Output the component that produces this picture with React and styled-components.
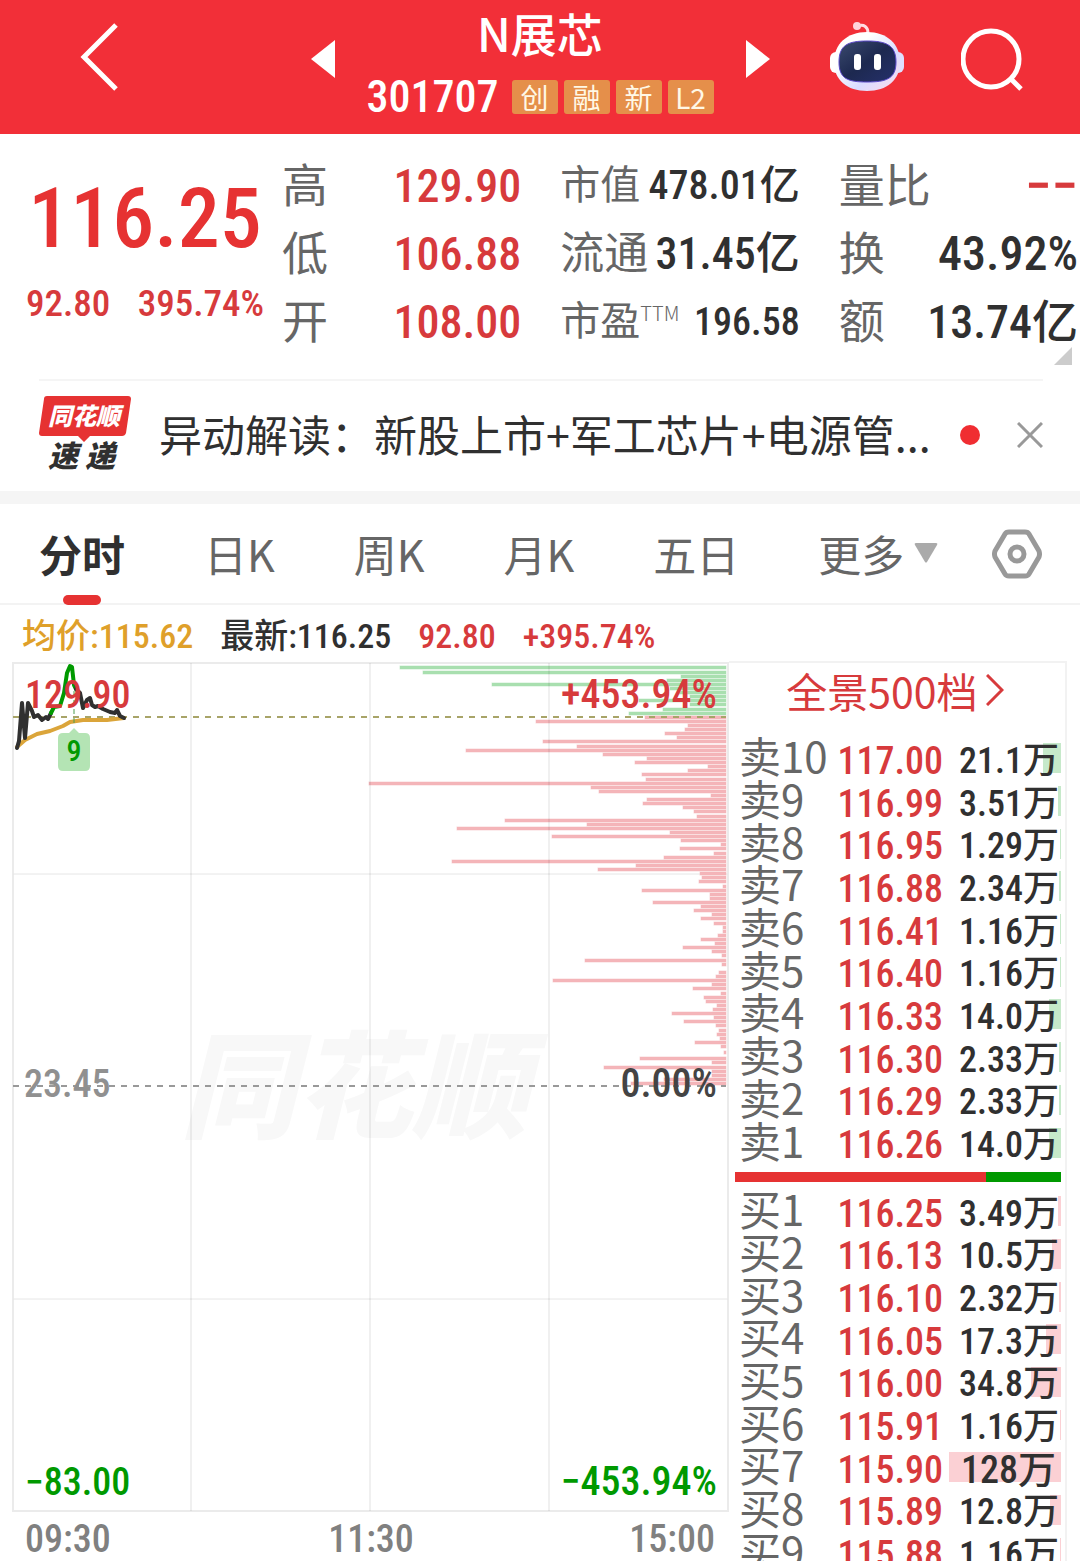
import React from 'react';
import styled, { createGlobalStyle } from 'styled-components';

const GlobalStyle = createGlobalStyle`
  * {
    box-sizing: border-box;
  }
  body {
    margin: 0;
    background: #fff;
    color: #303030;
    font-family: "Noto Sans CJK SC", sans-serif;
  }
  button {
    border: 0;
    padding: 0;
    background: none;
    color: inherit;
    font: inherit;
    cursor: pointer;
  }
  a {
    color: inherit;
    text-decoration: none;
  }
  svg {
    display: block;
  }
`;

const numberFont = '"Roboto Condensed", "Liberation Sans Narrow", Roboto, "Noto Sans CJK SC", sans-serif';

const Page = styled.div`
  height: 100vh;
  overflow: hidden;
`;

/* ---------- header ---------- */

const Header = styled.header`
  display: grid;
  grid-template-columns: 1fr auto 1fr;
  align-items: center;
  padding: 9px 57px 15px;
  background: #f22f38;
  color: #fff;
`;

const HeaderSide = styled.div`
  display: flex;
  justify-content: ${(p) => (p.$end ? 'flex-end' : 'flex-start')};
  align-items: center;
  gap: 57px;
  padding: 0 0 ${(p) => (p.$end ? 10 : 14)}px ${(p) => (p.$end ? 0 : 23)}px;
`;

const HeaderCenter = styled.div`
  display: flex;
  align-items: center;
  gap: 32px;
`;

const Arrow = styled.button`
  padding-bottom: 10px;
`;

const StockTitle = styled.div`
  display: flex;
  flex-direction: column;
  align-items: center;
  gap: 20px;
`;

const StockName = styled.h1`
  margin: 0;
  font-size: 46px;
  font-weight: 500;
  line-height: 46px;
`;

const CodeRow = styled.div`
  display: flex;
  align-items: center;
  gap: 6px;
  line-height: 44px;
`;

const Code = styled.span`
  margin-right: 7px;
  font-family: ${numberFont};
  font-size: 44px;
  font-weight: 500;
`;

const Tag = styled.span`
  width: 46px;
  border-radius: 3px;
  background: #e58f4a;
  color: #fff8e6;
  font-size: 28px;
  line-height: 34px;
  text-align: center;
`;

/* ---------- quote ---------- */

const Quote = styled.section`
  position: relative;
  display: flex;
  gap: 18px;
  padding: 17px 2px 24px 26px;
`;

const PriceBlock = styled.div`
  width: 238px;
  padding-top: 24px;
  color: #e63232;
  font-family: ${numberFont};
  font-weight: 500;
  text-align: center;
`;

const Price = styled.div`
  font-size: 84px;
  line-height: 88px;
`;

const Change = styled.div`
  display: flex;
  justify-content: space-between;
  margin-top: 20px;
  color: #d73a3c;
  font-size: 37px;
  line-height: 42px;
`;

const Stats = styled.div`
  flex: 1;
  display: grid;
  grid-template-columns: repeat(3, 1fr);
  column-gap: 39px;
`;

const Stat = styled.div`
  display: flex;
  justify-content: space-between;
  height: 68px;
  white-space: nowrap;
`;

const StatLabel = styled.span`
  color: #666;
  font-size: ${(p) => p.$size}px;
  line-height: 62px;
`;

const Ttm = styled.small`
  font-size: 20px;
  font-weight: 300;
  vertical-align: 14px;
  line-height: 1;
`;

const StatValue = styled.span`
  color: ${(p) => (p.$red ? '#d73a3c' : '#303030')};
  font-family: ${numberFont};
  font-size: ${(p) => p.$size}px;
  font-weight: 500;
  line-height: 70px;
`;

const Corner = styled.i`
  position: absolute;
  right: 8px;
  bottom: 14px;
  border-bottom: 18px solid #ccc;
  border-left: 18px solid transparent;
`;

/* ---------- news ---------- */

const News = styled.section`
  display: flex;
  align-items: center;
  height: 112px;
  margin: 0 37px 0 39px;
  padding-bottom: 2px;
  border-top: 2px solid #f5f5f5;
`;

const NewsLink = styled.a`
  flex: 1;
  margin-left: 28px;
  padding-bottom: 4px;
  font-size: 43px;
  white-space: nowrap;
`;

const Dot = styled.i`
  width: 20px;
  height: 20px;
  margin-right: 37px;
  border-radius: 50%;
  background: #f02d32;
`;

/* ---------- tabs ---------- */

const TabBar = styled.nav`
  display: flex;
  justify-content: space-between;
  align-items: center;
  height: 114px;
  padding: 0 38px 0 39px;
  border-top: 13px solid #f5f5f5;
  border-bottom: 2px solid #f3f3f3;
`;

const TabList = styled.div`
  display: flex;
  gap: 79px;
`;

const Tab = styled.button`
  position: relative;
  display: flex;
  align-items: center;
  gap: 10px;
  padding-bottom: 2px;
  color: ${(p) => (p.$active ? '#303030' : '#666')};
  font-size: 43px;
  font-weight: ${(p) => (p.$active ? 700 : 400)};
  line-height: 96px;
  white-space: nowrap;

  &::after {
    content: "";
    display: ${(p) => (p.$active ? 'block' : 'none')};
    position: absolute;
    left: 50%;
    bottom: -2px;
    width: 38px;
    height: 10px;
    margin-left: -19px;
    border-radius: 5px;
    background: #e63232;
  }
`;

/* ---------- chart + order book ---------- */

const Main = styled.main`
  display: flex;
  align-items: flex-start;
`;

const ChartPanel = styled.section`
  flex: 1;
  min-width: 0;
`;

const Legend = styled.div`
  display: flex;
  gap: 27px;
  height: 56px;
  padding-left: 22px;
  color: #d73a3c;
  font-family: ${numberFont};
  font-size: 34px;
  font-weight: 500;
  line-height: 62px;
  white-space: nowrap;
`;

const LegendItem = styled.span`
  color: ${(p) => p.$color};
`;

const ChartSvg = styled.svg`
  width: 100%;
  height: auto;

  text {
    font-family: ${numberFont};
    font-size: 38px;
    font-weight: 500;
  }
  .percent {
    font-size: 40px;
  }
  .mark {
    font-family: "Noto Sans CJK SC", sans-serif;
    font-size: 116px;
    font-style: italic;
    font-weight: 900;
  }
  .badge {
    font-size: 30px;
  }
`;

const Book = styled.section`
  width: 338px;
  margin: 56px 13px 0 0;
  border: 2px solid #f2f2f2;
  border-bottom: 0;
  border-left: 0;
  padding: 0 4px 0 6px;
`;

const BookLink = styled.a`
  display: flex;
  justify-content: center;
  align-items: center;
  gap: 8px;
  margin-bottom: 20px;
  padding-right: 6px;
  color: #d73a3c;
  font-size: 41px;
  line-height: 54px;
`;

const BookTable = styled.table`
  width: 100%;
  height: ${(p) => p.$height}px;
  border-collapse: collapse;
  white-space: nowrap;
`;

const Level = styled.th`
  padding: 0 0 6px 4px;
  color: #666;
  font-size: 42px;
  font-weight: 400;
  line-height: 36px;
  text-align: left;
  vertical-align: middle;
`;

const Cell = styled.td`
  width: ${(p) => (p.$volume ? 116 : 108)}px;
  padding: 5px ${(p) => (p.$large ? 5 : 2)}px 0 0;
  color: ${(p) => (p.$volume ? '#303030' : '#d73a3c')};
  font-family: ${numberFont};
  font-size: ${(p) => (p.$large || !p.$volume ? 38 : 36)}px;
  font-weight: 500;
  line-height: 36px;
  text-align: right;
  vertical-align: middle;
  background: linear-gradient(${(p) => p.$tint}, ${(p) => p.$tint}) right center / ${(p) => p.$bar || 0}px 30px no-repeat;
`;

const Ratio = styled.div`
  height: 10px;
  margin: 8px 0;
  background: linear-gradient(to right, #e63232 77%, #009900 77%);
`;

const stats = [
  { label: '高', value: '129.90', size: 46, labelSize: 46, red: true },
  { label: '市值', value: '478.01亿', size: 40, labelSize: 40 },
  { label: '量比', value: '−−', size: 54, labelSize: 46, red: true },
  { label: '低', value: '106.88', size: 46, labelSize: 46, red: true },
  { label: '流通', value: '31.45亿', size: 44, labelSize: 44 },
  { label: '换', value: '43.92%', size: 48, labelSize: 46 },
  { label: '开', value: '108.00', size: 46, labelSize: 46, red: true },
  { label: '市盈', ttm: true, value: '196.58', size: 38, labelSize: 40 },
  { label: '额', value: '13.74亿', size: 46, labelSize: 46 },
];

const sells = [
  ['卖10', '117.00', '21.1'],
  ['卖9', '116.99', '3.51'],
  ['卖8', '116.95', '1.29'],
  ['卖7', '116.88', '2.34'],
  ['卖6', '116.41', '1.16'],
  ['卖5', '116.40', '1.16'],
  ['卖4', '116.33', '14.0'],
  ['卖3', '116.30', '2.33'],
  ['卖2', '116.29', '2.33'],
  ['卖1', '116.26', '14.0'],
];

const buys = [
  ['买1', '116.25', '3.49'],
  ['买2', '116.13', '10.5'],
  ['买3', '116.10', '2.32'],
  ['买4', '116.05', '17.3'],
  ['买5', '116.00', '34.8'],
  ['买6', '115.91', '1.16'],
  ['买7', '115.90', '128'],
  ['买8', '115.89', '12.8'],
  ['买9', '115.88', '1.16'],
];

// [y, length] of every price level in the depth histogram
const greenDepth = [
  [6, 326], [11, 303], [15, 45], [19, 59], [23, 234], [27, 56], [31, 48], [35, 36],
  [39, 87], [43, 36], [48, 63], [52, 97],
];

const redDepth = [
  [56, 81], [60, 190], [64, 38], [68, 41], [72, 61], [76, 49], [80, 183], [85, 149],
  [89, 260], [93, 123], [97, 79], [101, 91], [105, 18], [109, 38], [113, 84], [118, 80],
  [122, 357], [126, 135], [130, 127], [134, 15], [138, 79], [142, 83], [146, 43], [150, 32],
  [155, 29], [159, 221], [163, 139], [167, 269], [171, 56], [175, 174], [179, 45], [183, 5],
  [187, 46], [192, 12], [196, 62], [200, 274], [204, 90], [208, 128], [212, 26], [216, 24],
  [220, 27], [225, 3], [229, 84], [233, 16], [237, 16], [241, 73], [245, 25], [249, 32],
  [253, 14], [257, 25], [262, 12], [266, 3], [270, 3], [274, 8], [278, 25], [282, 11],
  [286, 43], [290, 14], [294, 4], [299, 141], [303, 4], [311, 7], [315, 10], [319, 173],
  [323, 14], [327, 33], [332, 5], [336, 22], [340, 20], [344, 9], [348, 13], [352, 54],
  [356, 12], [360, 42], [364, 10], [369, 7], [373, 9], [377, 6], [381, 31], [385, 5],
  [391, 2], [397, 86], [401, 14], [406, 122], [410, 14], [414, 14], [418, 62], [422, 95],
];

function Robot() {
  return (
    <svg width="74" height="76" viewBox="0 0 74 76" fill="none">
      <defs>
        <linearGradient id="shell" x1="0" y1="0" x2="1" y2="1">
          <stop offset="0.3" stopColor="#fff" />
          <stop offset="0.65" stopColor="#d9dcff" />
          <stop offset="1" stopColor="#ffd9ea" />
        </linearGradient>
        <linearGradient id="visor" x1="0" y1="0" x2="1" y2="1">
          <stop offset="0" stopColor="#3b4a6e" />
          <stop offset="0.5" stopColor="#1d2950" />
          <stop offset="1" stopColor="#25306b" />
        </linearGradient>
      </defs>
      <path d="M28 5C34 3 38 6 38 12" stroke="#ffdde4" strokeWidth="3" />
      <circle cx="27" cy="5" r="4" fill="#ffd3dc" />
      <rect x="0" y="31" width="12" height="21" rx="6" fill="#fff" />
      <rect x="62" y="31" width="12" height="21" rx="6" fill="#dfe0ff" />
      <path d="M37 11C57 11 70 23 70 41S57 70 37 70 4 59 4 41 17 11 37 11z" fill="url(#shell)" />
      <path d="M37 20C56 20 66 24 66 41S56 61 37 61 9 58 9 41 18 20 37 20z" fill="url(#visor)" stroke="#5a48c8" strokeWidth="1" />
      <rect x="24" y="33" width="7" height="16" rx="3" fill="#fff" />
      <rect x="44" y="33" width="7" height="16" rx="3" fill="#fff" />
    </svg>
  );
}

function NewsLogo() {
  return (
    <svg width="92" height="80" viewBox="0 0 92 80">
      <path d="M8 1H89Q92 1 92 4L87 38Q86 41 83 41H51L45 47 39 41H3Q0 41 0 38L5 4Q5 1 8 1z" fill="#e63232" />
      <g fontFamily="Noto Sans CJK SC, sans-serif" fontStyle="italic" fontWeight="900">
        <text x="9" y="30" fontSize="24" fill="#fff">同花顺</text>
        <text x="9" y="72" fontSize="30" fill="#303030">速</text>
        <text x="46" y="72" fontSize="30" fill="#303030">递</text>
      </g>
    </svg>
  );
}

function Depth({ rows, color }) {
  return (
    <g fill={color} stroke={color} strokeOpacity="0.5" strokeWidth="1">
      {rows.map(([y, length]) => (
        <rect key={y} x={726 - length} y={y - 1} width={length} height="3" />
      ))}
    </g>
  );
}

function Chart() {
  return (
    <ChartSvg viewBox="0 0 729 900" fill="none">
      <text className="mark" x="180" y="468" fill="#f8f8f8">同花顺</text>
      <path d="M13 2H728V850H13z" stroke="#ebebeb" strokeWidth="2" />
      <path d="M13 213H728M13 638H728" stroke="#e6e6e6" />
      <Depth rows={greenDepth} color="#a9dfaf" />
      <Depth rows={redDepth} color="#f4b5b9" />
      <path d="M191 2V850M370 2V850M549 2V850" stroke="#000" strokeOpacity="0.12" />
      <path d="M13 56H726" stroke="#a8a468" strokeWidth="2" strokeDasharray="6 6" />
      <path d="M13 425H726" stroke="#999" strokeWidth="2" strokeDasharray="6 6" />

      <g strokeWidth="4" strokeLinejoin="round" strokeLinecap="round">
        <path d="M17 86L25 79 37 73 50 70 63 65 70 61 83 59 107 59 124 57" stroke="#dba53a" />
        <path d="M17 87L19 80 22 42 25 77 28 42 32 50 34 56 38 54 42 59 46 56 48 58 51 52" stroke="#303030" />
        <path d="M51 52L54 46 60 45 64 32 67 12 70 5 72 6 74 24 76 28" stroke="#009900" />
        <path d="M76 28L80 32 83 47 87 39 90 37 92 44 95 46 98 45 103 48 110 51 115 52 117 49 120 55 124 57" stroke="#303030" />
      </g>
      <path d="M74 30V66" stroke="#4d9c4d" strokeDasharray="5 4" />
      <path d="M74 67L79 72H85Q90 72 90 77V105Q90 110 85 110H63Q58 110 58 105V77Q58 72 63 72H69z" fill="#b4e4b4" />
      <text className="badge" x="74" y="100" textAnchor="middle" fill="#009900">9</text>

      <text x="25" y="47" fill="#d73a3c">129.90</text>
      <text className="percent" x="717" y="47" textAnchor="end" fill="#d73a3c">+453.94%</text>
      <text x="24" y="436" fill="#909090">23.45</text>
      <text className="percent" x="717" y="436" textAnchor="end" fill="#444">0.00%</text>
      <text x="25" y="834" fill="#009900">−83.00</text>
      <text className="percent" x="717" y="834" textAnchor="end" fill="#009900">−453.94%</text>
      <g fill="#808080">
        <text x="25" y="891">09:30</text>
        <text x="371" y="891" textAnchor="middle">11:30</text>
        <text x="715" y="891" textAnchor="end">15:00</text>
      </g>
    </ChartSvg>
  );
}

function OrderTable({ rows, tint, height }) {
  return (
    <BookTable $height={height}>
      <tbody>
        {rows.map(([level, price, volume]) => (
          <tr key={level}>
            <Level scope="row">{level}</Level>
            <Cell>{price}</Cell>
            <Cell $volume $large={volume >= 100} $tint={tint} $bar={Math.round((volume / 128) * 112)}>
              {volume}万
            </Cell>
          </tr>
        ))}
      </tbody>
    </BookTable>
  );
}

function App() {
  return (
    <Page>
      <GlobalStyle />
      <Header>
        <HeaderSide>
          <button aria-label="返回">
            <svg width="38" height="68" viewBox="0 0 38 68" fill="none" stroke="#fff" strokeWidth="5">
              <path d="M36 2L4 34 36 66" />
            </svg>
          </button>
        </HeaderSide>
        <HeaderCenter>
          <Arrow aria-label="上一只">
            <svg width="24" height="38" viewBox="0 0 24 38" fill="#fff"><path d="M24 0V38L0 19z" /></svg>
          </Arrow>
          <StockTitle>
            <StockName>N展芯</StockName>
            <CodeRow>
              <Code>301707</Code>
              <Tag>创</Tag>
              <Tag>融</Tag>
              <Tag>新</Tag>
              <Tag>L2</Tag>
            </CodeRow>
          </StockTitle>
          <Arrow aria-label="下一只">
            <svg width="24" height="38" viewBox="0 0 24 38" fill="#fff"><path d="M0 0V38L24 19z" /></svg>
          </Arrow>
        </HeaderCenter>
        <HeaderSide $end>
          <button aria-label="智能助手"><Robot /></button>
          <button aria-label="搜索">
            <svg width="62" height="64" viewBox="0 0 62 64" fill="none" stroke="#fff" strokeWidth="5">
              <circle cx="30" cy="32" r="28" />
              <path d="M49 51L60 62" />
            </svg>
          </button>
        </HeaderSide>
      </Header>

      <Quote>
        <PriceBlock>
          <Price>116.25</Price>
          <Change>
            <span>92.80</span>
            <span>395.74%</span>
          </Change>
        </PriceBlock>
        <Stats>
          {stats.map((s) => (
            <Stat key={s.label}>
              <StatLabel $size={s.labelSize}>
                {s.label}
                {s.ttm && <Ttm>TTM</Ttm>}
              </StatLabel>
              <StatValue $size={s.size} $red={s.red}>{s.value}</StatValue>
            </Stat>
          ))}
        </Stats>
        <Corner />
      </Quote>

      <News>
        <NewsLogo />
        <NewsLink href="#news">异动解读：新股上市+军工芯片+电源管...</NewsLink>
        <Dot />
        <button aria-label="关闭">
          <svg width="26" height="26" viewBox="0 0 26 26" stroke="#999" strokeWidth="3">
            <path d="M1 1L25 25M25 1L1 25" />
          </svg>
        </button>
      </News>

      <TabBar>
        <TabList>
          <Tab $active>分时</Tab>
          <Tab>日K</Tab>
          <Tab>周K</Tab>
          <Tab>月K</Tab>
          <Tab>五日</Tab>
          <Tab>
            更多
            <svg width="24" height="20" viewBox="0 0 24 20" fill="#aaa"><path d="M2 0H22Q24 0 23 2L13 19Q12 20 11 19L1 2Q0 0 2 0z" /></svg>
          </Tab>
        </TabList>
        <button aria-label="设置">
          <svg width="50" height="50" viewBox="0 0 50 50" fill="none" stroke="#999" strokeWidth="5" strokeLinejoin="round">
            <path d="M17 3H33Q36 3 37 5L47 22Q48 25 47 28L37 45Q36 47 33 47H17Q14 47 13 45L3 28Q2 25 3 22L13 5Q14 3 17 3z" />
            <circle cx="25" cy="25" r="7" />
          </svg>
        </button>
      </TabBar>

      <Main>
        <ChartPanel>
          <Legend>
            <LegendItem $color="#dfa02a">均价:115.62</LegendItem>
            <LegendItem $color="#303030">最新:116.25</LegendItem>
            <LegendItem>92.80</LegendItem>
            <LegendItem>+395.74%</LegendItem>
          </Legend>
          <Chart />
        </ChartPanel>
        <Book>
          <BookLink href="#depth">
            全景500档
            <svg width="18" height="32" viewBox="0 0 18 32" fill="none" stroke="#d73a3c" strokeWidth="3">
              <path d="M1 1L16 16 1 31" />
            </svg>
          </BookLink>
          <OrderTable rows={sells} tint="#c6e9ca" height={427} />
          <Ratio />
          <OrderTable rows={buys} tint="#fbd0d4" height={384} />
        </Book>
      </Main>
    </Page>
  );
}

export default App;
